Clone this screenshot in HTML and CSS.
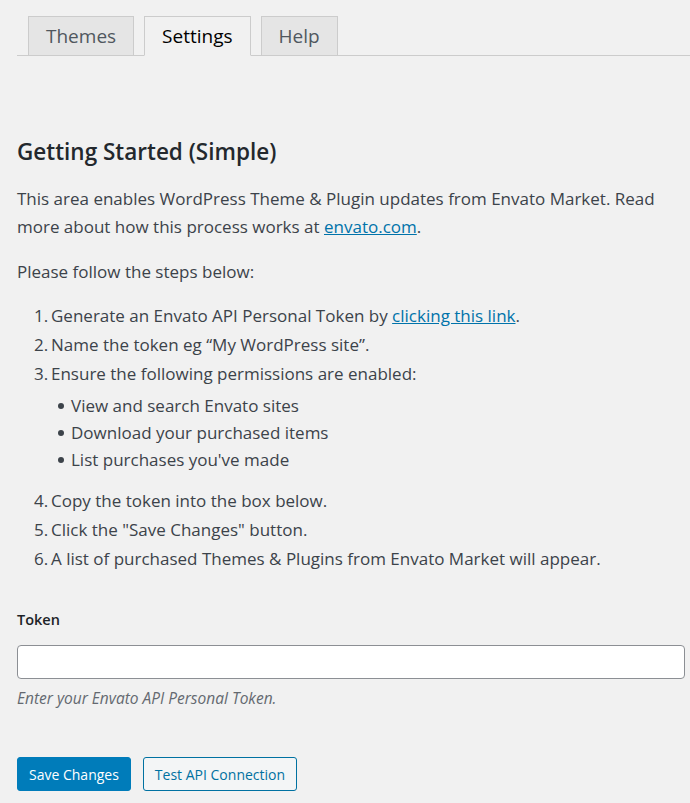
FILE: index.html
```html
<!DOCTYPE html>
<html lang="en">
<head>
<meta charset="utf-8">
<title>Envato Market</title>
<link rel="stylesheet" href="styles.css">
</head>
<body>
<div class="wrap">
  <nav class="tabs">
    <a class="tab" href="#">Themes</a>
    <a class="tab active" href="#">Settings</a>
    <a class="tab" href="#">Help</a>
  </nav>
  <main class="content">
    <h2 class="title">Getting Started (Simple)</h2>
    <p class="para">This area enables WordPress Theme &amp; Plugin updates from Envato Market. Read more about how this process works at <a href="#">envato.com</a>.</p>
    <p class="para intro">Please follow the steps below:</p>
    <ol class="steps">
      <li>Generate an Envato API Personal Token by <a href="#">clicking this link</a>.</li>
      <li>Name the token eg “My WordPress site”.</li>
      <li>Ensure the following permissions are enabled:
        <ul class="perms">
          <li>View and search Envato sites</li>
          <li>Download your purchased items</li>
          <li>List purchases you've made</li>
        </ul>
      </li>
      <li>Copy the token into the box below.</li>
      <li>Click the "Save Changes" button.</li>
      <li>A list of purchased Themes &amp; Plugins from Envato Market will appear.</li>
    </ol>
    <label class="label" for="token">Token</label>
    <input class="input" id="token" type="text">
    <p class="desc">Enter your Envato API Personal Token.</p>
    <div class="actions">
      <button class="btn primary">Save Changes</button>
      <button class="btn secondary">Test API Connection</button>
    </div>
  </main>
</div>
</body>
</html>
```
FILE: styles.css
```css
html, body {
  margin: 0;
  padding: 0;
  background: #f1f1f1;
}
body {
  font-family: "Open Sans", "Noto Sans", sans-serif;
  color: #3c434a;
  font-size: 17px;
}
.wrap {
  padding-left: 17px;
}
.tabs {
  display: flex;
  gap: 10px;
  padding: 16px 0 0 11px;
  border-bottom: 1px solid #ccc;
}
.tab {
  display: block;
  height: 38px;
  line-height: 39px;
  padding: 0 17px;
  margin-bottom: -1px;
  border: 1px solid #ccc;
  background: #e5e5e5;
  color: #50575e;
  font-size: 19px;
  text-decoration: none;
}
.tab.active {
  background: #f1f1f1;
  border-bottom-color: #f1f1f1;
  color: #000;
}
.content {
  padding-right: 6px;
}
.title {
  margin: 81px 0 0;
  font-size: 22.5px;
  line-height: 30px;
  font-weight: 600;
  color: #23282d;
}
.para {
  margin: 18px 0 0;
  line-height: 28px;
}
.intro {
  margin-top: 17px;
}
a {
  color: #0073aa;
}
.steps {
  margin: 16px 0 0;
  padding-left: 34px;
  list-style: none;
  counter-reset: step;
}
.steps > li {
  line-height: 28px;
  margin-bottom: 1px;
  counter-increment: step;
}
.steps > li::before {
  content: counter(step) ".";
  display: inline-block;
  width: 17px;
  margin-left: -17px;
}
.perms {
  margin: 4px 0 14px;
  padding-left: 20px;
  list-style: none;
}
.perms li {
  line-height: 27px;
  display: flex;
  align-items: center;
}
.perms li::before {
  content: "";
  width: 6px;
  height: 6px;
  border-radius: 50%;
  background: #3c434a;
  margin: 0 7px 0 -13px;
  flex: none;
}
.label {
  display: block;
  margin-top: 37px;
  font-size: 14.5px;
  line-height: 20px;
  font-weight: 600;
  color: #1d2327;
}
.input {
  display: block;
  box-sizing: border-box;
  width: 668px;
  height: 34px;
  margin-top: 15px;
  border: 1px solid #8c8f94;
  border-radius: 4px;
  background: #fff;
}
.desc {
  margin: 9px 0 0;
  font-size: 15.5px;
  line-height: 20px;
  font-style: italic;
  color: #646970;
}
.actions {
  display: flex;
  gap: 12px;
  margin-top: 49px;
}
.btn {
  height: 34px;
  padding: 0 11px;
  border-radius: 3px;
  font-family: "Open Sans", "Noto Sans", sans-serif;
  font-size: 14px;
  border: 1px solid #0071a1;
}
.primary {
  background: #007cba;
  border-color: #007cba;
  color: #fff;
}
.secondary {
  background: #f3f5f6;
  color: #0071a1;
}
```
